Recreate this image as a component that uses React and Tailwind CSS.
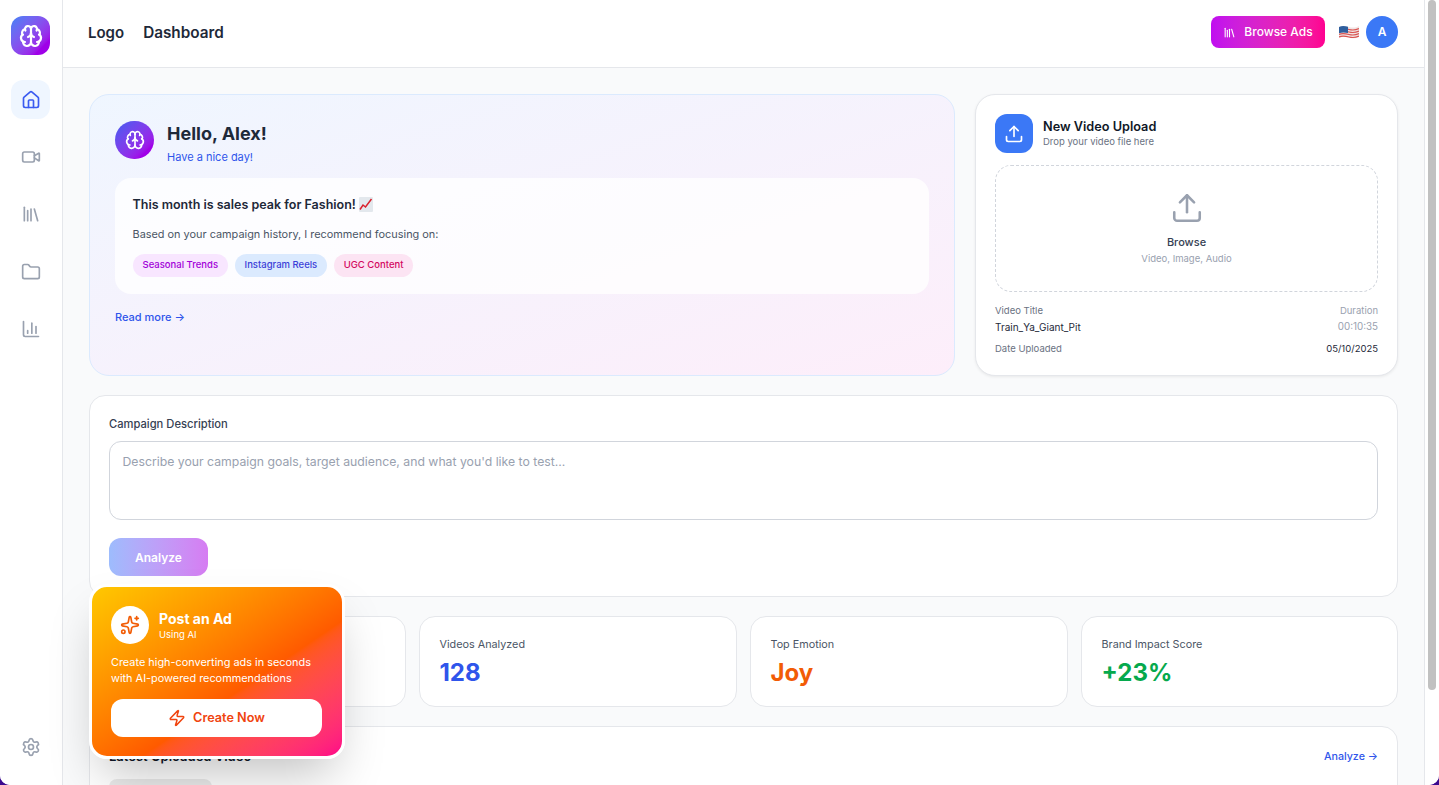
import { Brain, House, Video, Library, Folder, ChartColumn, Settings, Upload, Sparkles, Zap } from 'lucide-react'

function FlagIcon() {
  return (
    <svg width="20" height="16" viewBox="0 0 20 16" className="shrink-0">
      <path d="M0 3c3-1.600 6-1 10 0s7 .6 10-1v11c-3 1.600-6 1.600-10 .4S3 12.600 0 14z" fill="#f1e4e4" />
      <path d="M0 5.500c3-1.500 6-1 10 0s7 .5 10-1M0 8c3-1.500 6-1 10 0s7 .5 10-1M0 10.500c3-1.500 6-1 10 0s7 .5 10-1M0 13c3-1.500 6-1 10 0s7 .5 10-1" stroke="#d9534f" strokeWidth="1.200" fill="none" />
      <path d="M0 3c3-1.600 6-1 9-.3V9c-3-.7-6-1-9 .3z" fill="#2f5f9e" />
    </svg>
  )
}

function ChartEmoji() {
  return (
    <svg width="14" height="15" viewBox="0 0 14 15" className="inline-block ml-[3px] -mt-0.5 align-middle">
      <rect width="14" height="15" rx="1" fill="#e3e8ed" />
      <path d="M1 12.500l3-4.500 2.500 2L12.500 2" stroke="#d9202c" strokeWidth="1.500" fill="none" />
    </svg>
  )
}

function Stat({ label, value, color }) {
  return (
    <div className="bg-white border border-gray-200 rounded-2xl h-[91px] px-[19.500px] pt-5">
      <p className="text-[10.800px] leading-4 text-gray-600">{label}</p>
      <p className={`text-2xl font-bold leading-8 mt-[4px] ${color}`}>{value}</p>
    </div>
  )
}

const NAV = [Video, Library, Folder, ChartColumn]

export default function App() {
  return (
    <div className="h-[785px] overflow-hidden bg-[#3b0a8f] [font-family:Inter,sans-serif]">
      <div className="relative flex h-full rounded-b-[10px] overflow-hidden bg-white">
        {/* Sidebar */}
        <aside className="w-[63px] shrink-0 bg-white border-r border-gray-200 flex flex-col pl-[11px] pt-4 pb-[19px]">
          <div className="w-[39px] h-[39px] rounded-xl bg-gradient-to-br from-[#3b82f6] to-[#9f00e8] to-80% flex items-center justify-center">
            <Brain size={24} className="text-white" strokeWidth={2.2} />
          </div>
          <div className="w-[39px] h-[39px] mt-[25px] rounded-xl bg-[#eff6ff] flex items-center justify-center">
            <House size={20} className="text-[#3b5bf0]" />
          </div>
          <div className="flex flex-col gap-[18.500px] mt-[18px]">
            {NAV.map((Icon, i) => (
              <div key={i} className="w-[39px] h-[39px] flex items-center justify-center">
                <Icon size={20} className="text-gray-400" />
              </div>
            ))}
          </div>
          <div className="mt-auto w-[39px] h-[39px] flex items-center justify-center">
            <Settings size={20} className="text-gray-400" />
          </div>
        </aside>

        {/* Page column */}
        <div className="flex-1 min-w-0 h-full overflow-hidden bg-[#f9fafb]">
          <header className="h-[68px] bg-white border-b border-gray-200 flex items-center pl-[25px] pr-[26px] pb-[3px]">
            <span className="text-[15px] font-semibold leading-6 mt-[1px] text-gray-800">Logo</span>
            <span className="text-[15.300px] font-semibold leading-6 mt-[1px] text-gray-800 ml-[19px]">Dashboard</span>
            <button className="ml-auto h-8 w-[114px] rounded-lg bg-gradient-to-r from-[#c00cf0] to-[#ff0090] text-white text-xs font-medium flex items-center justify-center gap-2">
              <Library size={13} />
              Browse Ads
            </button>
            <span className="ml-[14px]"><FlagIcon /></span>
            <div className="ml-[7px] w-8 h-8 rounded-full bg-[#3b78f6] text-white text-xs font-semibold flex items-center justify-center">A</div>
          </header>

          <main className="px-[26px] pt-[26px] flex flex-col gap-[19px]">
            <div className="grid grid-cols-[866px_423px] gap-5">
              {/* Hero */}
              <section className="h-[282px] rounded-[20px] border border-[#dbeafe] bg-gradient-to-br from-[#eff6ff] to-[#fdeefa] px-[25px] pt-[25px]">
                <div className="flex items-start gap-[13px]">
                  <div className="w-[39px] h-[38px] mt-[1px] rounded-full bg-gradient-to-br from-[#3b5bf0] to-[#a000e8] to-80% flex items-center justify-center">
                    <Brain size={20} className="text-white" />
                  </div>
                  <div>
                    <h1 className="text-lg font-bold leading-7 text-gray-800">Hello, Alex!</h1>
                    <p className="text-[11px] leading-4 mt-[1px] text-[#2f55eb]">Have a nice day!</p>
                  </div>
                </div>
                <div className="mt-[13px] h-[116px] rounded-2xl bg-white/80 px-[17.500px] pt-[19px]">
                  <p className="text-[12.500px] font-semibold leading-4 text-gray-800">
                    This month is sales peak for Fashion!<ChartEmoji />
                  </p>
                  <p className="text-[10.900px] leading-4 text-gray-600 mt-[13px]">Based on your campaign history, I recommend focusing on:</p>
                  <div className="flex gap-[6.500px] mt-[12px]">
                    <span className="h-[23px] px-2.5 rounded-full bg-[#f8e6ff] text-[#a200d8] text-[9.500px] font-medium flex items-center">Seasonal Trends</span>
                    <span className="h-[23px] px-2.5 rounded-full bg-[#dbeafe] text-[#3b3fd8] text-[9.500px] font-medium flex items-center">Instagram Reels</span>
                    <span className="h-[23px] px-2.5 rounded-full bg-[#fce4f3] text-[#d3085f] text-[9.500px] font-medium flex items-center">UGC Content</span>
                  </div>
                </div>
                <p className="mt-[15px] text-[11px] font-medium leading-4 text-[#2f55eb]">Read more →</p>
              </section>

              {/* Upload */}
              <section className="h-[282px] rounded-[20px] border border-gray-200 bg-white shadow-[0_1px_3px_rgba(0,0,0,0.07)] px-[19px] pt-[19px]">
                <div className="flex items-center gap-[10px]">
                  <div className="w-[38px] h-[39px] rounded-xl bg-[#3b78f6] flex items-center justify-center">
                    <Upload size={20} className="text-white" />
                  </div>
                  <div>
                    <h2 className="text-[12.700px] font-semibold leading-4 mt-[2px] text-gray-900">New Video Upload</h2>
                    <p className="text-[9.500px] leading-4 -mt-[1px] text-gray-500">Drop your video file here</p>
                  </div>
                </div>
                <div className="mt-[12px] h-[127px] rounded-2xl border border-dashed border-gray-300 flex flex-col items-center pt-[25px]">
                  <Upload size={34} className="text-gray-400" strokeWidth={1.800} />
                  <p className="mt-[9px] text-[11px] font-medium leading-4 text-gray-700">Browse</p>
                  <p className="text-[9.500px] leading-4 mt-[1px] text-gray-400">Video, Image, Audio</p>
                </div>
                <div className="mt-[11px] text-[9.500px] leading-4">
                  <div className="flex justify-between text-gray-500"><span>Video Title</span><span className="text-gray-400">Duration</span></div>
                  <div className="flex justify-between text-gray-800"><span className="text-[10px]">Train_Ya_Giant_Pit</span><span className="text-gray-400 text-[9.800px]">00:10:35</span></div>
                  <div className="flex justify-between mt-[6px] text-gray-500"><span>Date Uploaded</span><span className="text-gray-800">05/10/2025</span></div>
                </div>
              </section>
            </div>

            {/* Campaign */}
            <section className="h-[202px] rounded-2xl border border-gray-200 bg-white px-[19px] pt-[20px]">
              <label className="block text-[11.200px] font-medium leading-4 text-gray-700">Campaign Description</label>
              <textarea
                placeholder="Describe your campaign goals, target audience, and what you'd like to test..."
                className="block mt-[9px] w-full h-[79px] resize-none rounded-xl border border-gray-300 px-[12.500px] py-[12px] text-[12.250px] leading-4 placeholder:text-gray-400 outline-none"
              />
              <button className="mt-[18px] w-[99px] h-[38px] pt-[1px] rounded-xl bg-gradient-to-r from-[#9dbcfd] to-[#d67cf2] text-white text-xs font-semibold">Analyze</button>
            </section>

            {/* Stats */}
            <div className="grid grid-cols-[317px_318px_318px_317px] gap-[13px]">
              <div className="bg-white border border-gray-200 rounded-2xl h-[91px]" />
              <Stat label="Videos Analyzed" value="128" color="text-[#2f55eb]" />
              <Stat label="Top Emotion" value="Joy" color="text-[#f25c05]" />
              <Stat label="Brand Impact Score" value="+23%" color="text-[#06a94d]" />
            </div>

            {/* Latest */}
            <section className="h-[148px] rounded-2xl border border-gray-200 bg-white px-[19px] pt-[21px]">
              <div className="flex items-start justify-between">
                <h3 className="text-[13px] font-semibold leading-4 text-gray-900">Latest Uploaded Video</h3>
                <span className="text-[10.700px] font-medium leading-4 mt-[1px] text-[#2f55eb]">Analyze →</span>
              </div>
              <div className="mt-[14px] w-[103px] h-6 rounded-lg bg-[#ebebeb]" />
            </section>
          </main>
        </div>

        {/* Scrollbar */}
        <div className="w-[15px] shrink-0 bg-white border-l border-gray-200 pl-[3px]">
          <div className="w-2 h-[690px] rounded-full bg-[#c1c1c1]" />
        </div>

        {/* Floating promo */}
        <div className="absolute left-[89px] top-[584px] w-64 h-[175px] rounded-[18px] border-[3px] border-white bg-gradient-to-br from-[#ffc800] via-[#ff5a00] via-60% to-[#ff0088] pl-[19px] pr-[20px] pt-[19px] shadow-2xl">
          <div className="flex items-start gap-[10px]">
            <div className="w-[38px] h-[38px] rounded-full bg-white flex items-center justify-center">
              <Sparkles size={20} className="text-[#f25c05]" />
            </div>
            <div className="text-white">
              <p className="text-sm font-bold leading-5 mt-[3px]">Post an Ad</p>
              <p className="text-[9.500px] leading-4 -mt-[2px]">Using AI</p>
            </div>
          </div>
          <p className="mt-[10px] text-[10.900px] leading-4 text-white">Create high-converting ads in seconds with AI-powered recommendations</p>
          <button className="mt-[13px] w-full h-[38px] rounded-xl bg-white text-[#f0440f] text-[12.700px] font-semibold flex items-center justify-center gap-[7px]">
            <Zap size={18} />
            Create Now
          </button>
        </div>
      </div>
    </div>
  )
}
